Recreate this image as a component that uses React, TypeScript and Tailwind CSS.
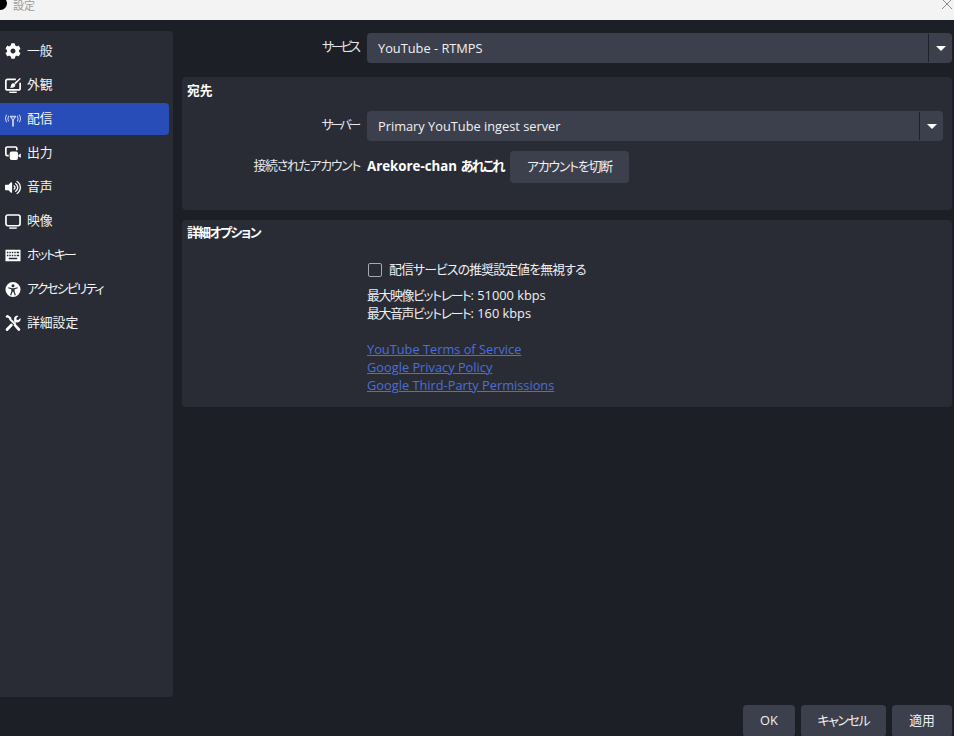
import React from 'react';
import { FaCog, FaVolumeUp } from 'react-icons/fa';

const font = { fontFamily: '"Open Sans", "Noto Sans CJK JP", sans-serif' };

// icons OBS draws itself and the packages don't have
const AppearanceIcon = () => (
  <svg width="17" height="17" viewBox="0 0 17 17" fill="none">
    <path d="M11.5 2H2.8C1.6 2 .9 2.8.9 3.9v7.4c0 1.1.7 1.9 1.9 1.9h11.4c1.2 0 1.9-.8 1.9-1.9V5.5" stroke="white" strokeWidth="1.8" />
    <path d="M4.5 15.7h8" stroke="white" strokeWidth="1.5" />
    <path d="M15.9.4l.9.9-5.6 5.9-1.4-1.3z" fill="white" />
    <path d="M9.2 6.2c1.1.2 1.8 1.1 1.7 2.2-.2 1.5-1.6 2.5-6 2.6 1.6-.9 1.2-1.9 1.6-3.1.5-1.2 1.6-1.9 2.7-1.7z" fill="white" />
  </svg>
);

const StreamIcon = () => (
  <svg width="17" height="17" viewBox="0 0 17 17" fill="none" stroke="#c3cdf0" strokeWidth="1.1">
    <path d="M1.9 3.5C.2 6 .2 9 1.9 11.5M15.1 3.5c1.7 2.5 1.7 5.5 0 8" />
    <path d="M4 4.5c-1.1 1.9-1.1 4.1 0 6M13 4.5c1.1 1.9 1.1 4.1 0 6" />
    <path d="M5.2 5.4h6.6" strokeWidth="1.8" />
    <path d="M6.2 6l2.3 3.4L10.8 6" />
    <path d="M8.5 8v8" strokeWidth="2" />
  </svg>
);

const OutputIcon = () => (
  <svg width="17" height="17" viewBox="0 0 17 17" fill="none">
    <path d="M12.6 5V3.2c0-1-.6-1.6-1.6-1.6H2.5C1.4 1.6.9 2.2.9 3.2v6c0 1 .5 1.6 1.6 1.6H4" stroke="white" strokeWidth="1.8" />
    <rect x="5" y="6.4" width="8.8" height="9" rx="2" fill="white" />
    <path d="M14.2 10.2l2.6-1.6v4.4l-2.6-1.4z" fill="white" />
  </svg>
);

const VideoIcon = () => (
  <svg width="17" height="17" viewBox="0 0 17 17" fill="none">
    <rect x="1" y="1.6" width="15" height="11.4" rx="2" stroke="white" strokeWidth="1.8" />
    <path d="M4.5 15.5h8" stroke="white" strokeWidth="1.5" />
  </svg>
);

const KeyboardIcon = () => (
  <svg width="17" height="17" viewBox="0 0 17 17">
    <path
      fillRule="evenodd"
      fill="white"
      d="M.5 2.5h16v12H.5zM2 4.4v1.6h1.6V4.4zm2.6 0v1.6h1.6V4.4zm2.6 0v1.6h1.6V4.4zm2.6 0v1.6h1.6V4.4zm2.6 0v1.6H15V4.4zM2 7.6v1.6h1.6V7.6zm2.6 0v1.6h1.6V7.6zm2.6 0v1.6h1.6V7.6zm2.6 0v1.6h1.6V7.6zm2.6 0v1.6H15V7.6zM4 10.8v1.6h9v-1.6z"
    />
  </svg>
);

const AccessIcon = () => (
  <svg width="17" height="17" viewBox="0 0 17 17">
    <path
      fillRule="evenodd"
      fill="white"
      d="M8.5.5a8 8 0 1 1 0 16 8 8 0 0 1 0-16zm0 2.3a1.6 1.6 0 1 0 0 3.2 1.6 1.6 0 0 0 0-3.2zM3.6 6.2l-.3 1.1 3.4 1v2.2l-1.3 3.9 1.1.4 1.5-3.8h.9l1.5 3.8 1.1-.4-1.3-3.9V8.3l3.4-1-.3-1.1-3.9 1H7.5z"
    />
  </svg>
);

const ToolsIcon = () => (
  <svg width="17" height="17" viewBox="0 0 17 17" fill="none">
    <path d="M6.8 10.2l-4.6 4.6" stroke="white" strokeWidth="3" strokeLinecap="round" />
    <path d="M10.2 6.8l1.6-1.6" stroke="white" strokeWidth="3" />
    <path d="M16.4 2.6l-2.2 2.2-1.9-.2-.2-1.9L14.3.5c-1.5-.5-3.3 0-4.1 1.2-.8 1.2-.8 2.6-.1 3.8l1.4 1.4c1.2.7 2.7.6 3.8-.2 1.2-.9 1.6-2.7 1.1-4.1z" fill="white" />
    <path d="M1.2 1.8l1.4-1.2 3 2.2v1.3l5.6 5.6" stroke="white" strokeWidth="2.2" />
    <path d="M9 10.4l1.8-1.8 5 5.2c.6.7.6 1.5 0 2.1-.6.6-1.5.6-2.1 0z" fill="white" />
  </svg>
);

const navItems = [
  { label: '一般', icon: <FaCog size={16} color="white" />, tracking: '' },
  { label: '外観', icon: <AppearanceIcon />, tracking: '' },
  { label: '配信', icon: <StreamIcon />, active: true, tracking: '' },
  { label: '出力', icon: <OutputIcon />, tracking: '' },
  { label: '音声', icon: <FaVolumeUp size={17} color="white" />, tracking: '' },
  { label: '映像', icon: <VideoIcon />, tracking: '' },
  { label: 'ホットキー', icon: <KeyboardIcon />, tracking: 'tracking-[-1.8px]' },
  { label: 'アクセシビリティ', icon: <AccessIcon />, tracking: 'tracking-[-1.75px]' },
  { label: '詳細設定', icon: <ToolsIcon />, tracking: '' },
];

const Combo = ({ value, className }: { value: string; className: string }) => (
  <div className={`flex h-[30px] items-stretch rounded-[4px] bg-[#3c404d] ${className}`}>
    <div className="flex flex-1 items-center pl-[11px] pt-px text-[#f0f0f3]">{value}</div>
    <div className="my-px w-px bg-[#1f212a]" />
    <div className="flex w-[23px] items-center justify-center">
      <div className="h-0 w-0 border-x-[5px] border-t-[5px] border-x-transparent border-t-white" />
    </div>
  </div>
);

const Footer = ({ label, className }: { label: string; className: string }) => (
  <div className={`flex h-[32px] items-center justify-center rounded-[4px] bg-[#3c404d] text-[#f0f0f3] ${className}`}>
    {label}
  </div>
);

export default function App() {
  return (
    <div
      style={font}
      className="flex h-[736px] w-[954px] flex-col overflow-hidden bg-[#1d1f26] text-[12.8px] text-white [font-feature-settings:'palt']"
    >
      {/* title bar, the window is cut off at the top of the picture */}
      <div className="flex h-5 shrink-0 items-start bg-[#f3f3f3]">
        <div className="ml-[-6px] mt-[-3px] h-[13px] w-[13px] rounded-full bg-black" />
        <div className="ml-[6px] text-[11px] leading-[11px] text-[#9a9a9a]">設定</div>
        <svg className="ml-auto mr-[1px] mt-[-2px]" width="12" height="12" viewBox="0 0 12 12" stroke="#8c8c8c" strokeWidth="1">
          <path d="M1 1l10 10M11 1L1 11" />
        </svg>
      </div>

      <div className="flex h-[685px] shrink-0">
        {/* sidebar */}
        <div className="mt-[11px] flex h-[666px] w-[173px] shrink-0 flex-col gap-[2px] rounded-r-[4px] bg-[#292c35] pt-1">
          {navItems.map((item) => (
            <div
              key={item.label}
              className={`flex h-[32px] w-[169px] shrink-0 items-center rounded-r-[4px] pl-[5px] ${item.active ? 'bg-[#284cb8]' : ''}`}
            >
              <div className="flex w-[16px] justify-center">{item.icon}</div>
              <span className={`ml-[6px] text-[#f5f5f7] ${item.tracking}`}>{item.label}</span>
            </div>
          ))}
        </div>

        {/* main column */}
        <div className="ml-[9px] mr-[2px] flex flex-1 flex-col pt-[13px]">
          <div className="flex items-center">
            <div className="w-[179px] pb-[2px] pr-[3px] text-right tracking-[-3px] text-[#e8e8ec]">サービス</div>
            <Combo value="YouTube - RTMPS" className="ml-[6px] flex-1" />
          </div>

          <div className="mt-[14px] h-[133px] rounded-[4px] bg-[#292c35]">
            <div className="pl-[5px] pt-[4px] font-bold leading-[18px]">宛先</div>
            <div className="mt-[12px] flex items-center">
              <div className="w-[179px] pb-[2px] pr-[3px] text-right tracking-[-3.2px] text-[#e8e8ec]">サーバー</div>
              <Combo value="Primary YouTube ingest server" className="ml-[6px] mr-[9px] flex-1" />
            </div>
            <div className="mt-[10px] flex items-center">
              <div className="w-[179px] pb-[3px] pr-px text-right tracking-[-1.2px] text-[#e8e8ec]">接続されたアカウント</div>
              <div className="ml-[6px] w-[143px] text-[13.3px] font-bold">
                Arekore-chan <span className="tracking-[-2px]">あれこれ</span>
              </div>
              <div className="flex h-[32px] w-[119px] items-center justify-center rounded-[4px] bg-[#3c404d] tracking-[-1.1px] text-[#f0f0f3]">
                アカウントを切断
              </div>
            </div>
          </div>

          <div className="mt-[10px] h-[187px] rounded-[4px] bg-[#292c35]">
            <div className="pl-[5px] pt-[3px] font-bold leading-[18px] tracking-[-1.5px]">詳細オプション</div>
            <div className="ml-[185px] mt-[20px] flex flex-col">
              <div className="flex h-[18px] items-center">
                <div className="ml-px h-[14px] w-[14px] rounded-[2px] border border-[#a8a8ae]" />
                <span className="ml-[7px] tracking-[-0.8px] text-[#f0f0f3]">配信サービスの推奨設定値を無視する</span>
              </div>
              <div className="mt-[7px] leading-[18px] text-[#f0f0f3]">
                <span className="tracking-[-1.3px]">最大映像ビットレート</span>: 51000 kbps
              </div>
              <div className="leading-[18px] text-[#f0f0f3]">
                <span className="tracking-[-1.3px]">最大音声ビットレート</span>: 160 kbps
              </div>
              <div className="mt-[18px] flex flex-col leading-[18px] text-[#4a6fdc]">
                <a className="underline">YouTube Terms of Service</a>
                <a className="underline">Google Privacy Policy</a>
                <a className="underline">Google Third-Party Permissions</a>
              </div>
            </div>
          </div>
        </div>
      </div>

      {/* dialog buttons */}
      <div className="flex shrink-0 justify-end gap-[6px] pr-[2px]">
        <Footer label="OK" className="w-[52px]" />
        <Footer label="キャンセル" className="w-[85px] tracking-[-1.2px]" />
        <Footer label="適用" className="w-[60px]" />
      </div>
    </div>
  );
}
